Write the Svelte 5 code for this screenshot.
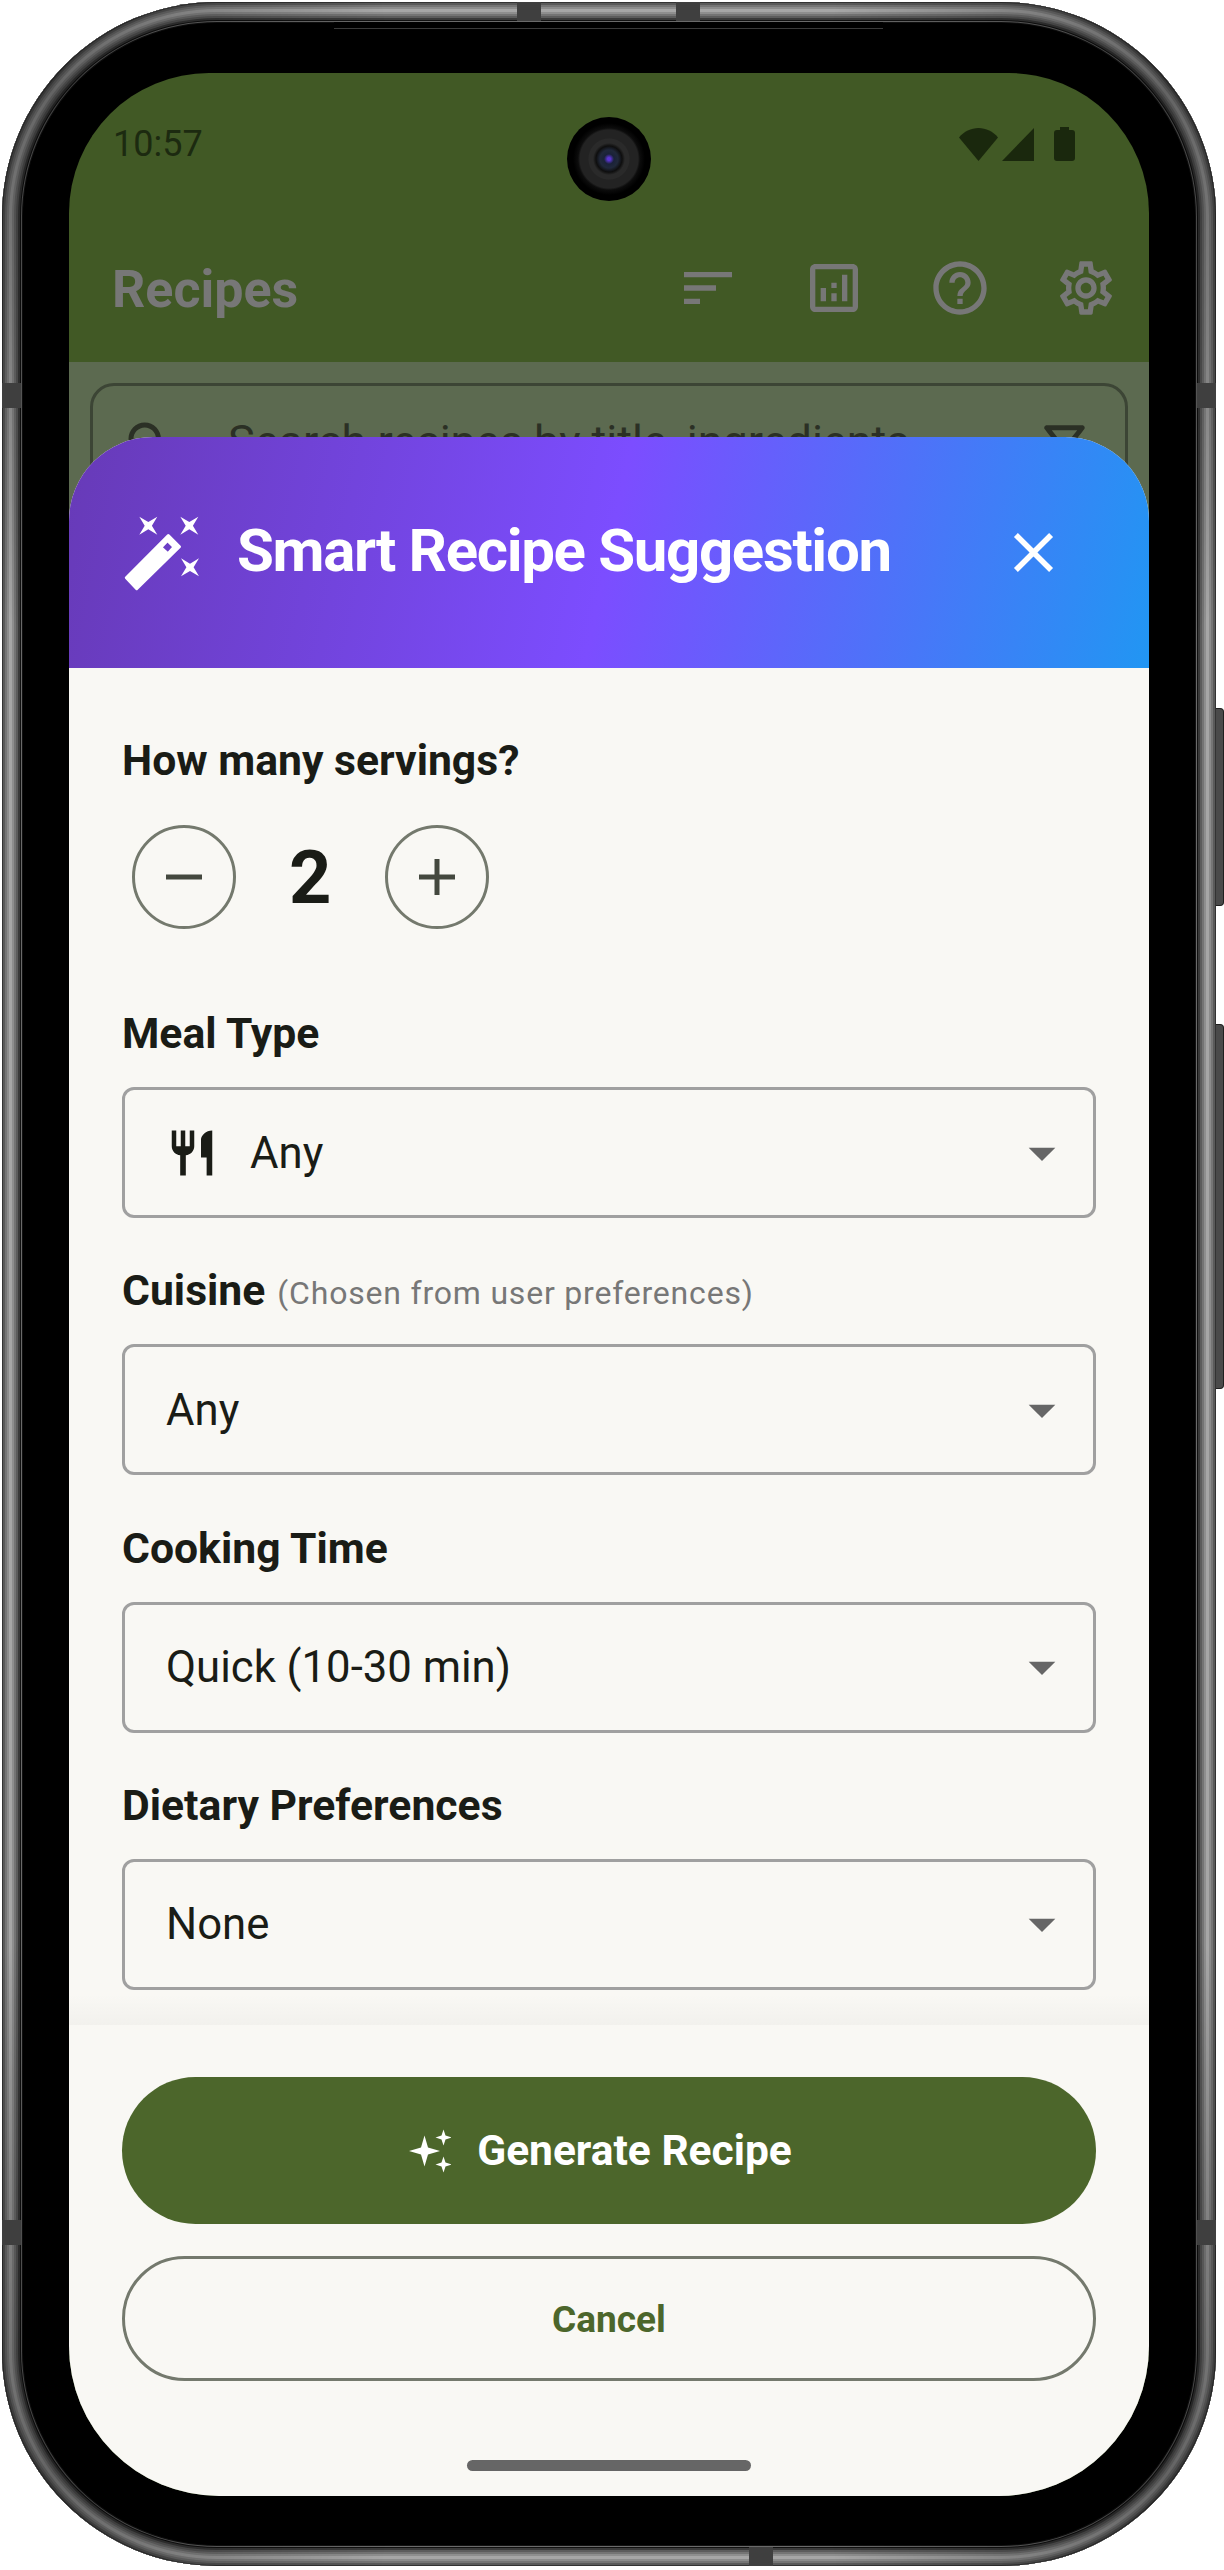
<script>
  const fields = [
    { label: "Cuisine", hint: "(Chosen from user preferences)", value: "Any" },
    { label: "Cooking Time", value: "Quick (10-30 min)" },
    { label: "Dietary Preferences", value: "None" }
  ];

  // four point star, tips on the axes or on the diagonals
  function star(cx, cy, r, waist, diagonal = false) {
    const pts = [];
    for (let i = 0; i < 8; i++) {
      const a = (i * Math.PI) / 4 + (diagonal ? Math.PI / 4 : 0);
      const d = i % 2 === 0 ? r * (diagonal ? 1.41 : 1) : waist;
      pts.push((cx + Math.cos(a) * d).toFixed(1) + " " + (cy + Math.sin(a) * d).toFixed(1));
    }
    return "M" + pts.join("L") + "Z";
  }
</script>

<div class="phone">
  <div class="ring-shade"></div>
  <div class="lip"></div>
  <span class="band top-a"></span>
  <span class="band top-b"></span>
  <span class="band left-a"></span>
  <span class="band left-b"></span>
  <span class="band right-a"></span>
  <span class="band right-b"></span>
  <span class="band bottom-a"></span>
  <span class="key key-power"></span>
  <span class="key key-volume"></span>

  <div class="screen">
    <div class="statusbar">
      <span class="time">10:57</span>
      <div class="status-icons">
        <svg width="39" height="33" viewBox="0 0 39 33"><path d="M0 9.5C5 3.5 12 0 19.5 0S34 3.5 39 9.5L19.5 33Z" /></svg>
        <svg width="33" height="33" viewBox="0 0 33 33"><path d="M0 33 32 0V33Z" /></svg>
        <svg class="battery" width="21" height="34" viewBox="0 0 21 34"><path d="M6 0h9v3h3q3 0 3 3v25q0 3-3 3H3q-3 0-3-3V6q0-3 3-3h3Z" /></svg>
      </div>
    </div>

    <div class="appbar">
      <h1>Recipes</h1>
      <div class="actions">
        <span class="action"><svg width="64" height="64" viewBox="0 0 24 24"><path d="M3 18h6v-2H3v2zM3 6v2h18V6H3zm0 7h12v-2H3v2z" /></svg></span>
        <span class="action"><svg width="64" height="64" viewBox="0 0 24 24"><path d="M19 3H5c-1.1 0-2 .9-2 2v14c0 1.1.9 2 2 2h14c1.1 0 2-.9 2-2V5c0-1.1-.9-2-2-2zm0 16H5V5h14v14z" /><path d="M7 12h2v5H7zM15 7h2v10h-2zM11 14h2v3h-2zM11 10h2v2h-2z" /></svg></span>
        <span class="action"><svg width="64" height="64" viewBox="0 0 24 24"><path d="M11 18h2v-2h-2v2zm1-16C6.48 2 2 6.48 2 12s4.48 10 10 10 10-4.48 10-10S17.52 2 12 2zm0 18c-4.41 0-8-3.59-8-8s3.59-8 8-8 8 3.59 8 8-3.59 8-8 8zm0-14c-2.21 0-4 1.79-4 4h2c0-1.1.9-2 2-2s2 .9 2 2c0 2-3 1.75-3 5h2c0-2.25 3-2.5 3-5 0-2.21-1.79-4-4-4z" /></svg></span>
        <span class="action"><svg width="64" height="64" viewBox="0 0 24 24"><path d="M19.43 12.98c.04-.32.07-.64.07-.98 0-.34-.03-.66-.07-.98l2.11-1.65c.19-.15.24-.42.12-.64l-2-3.46c-.09-.16-.26-.25-.44-.25-.06 0-.12.01-.17.03l-2.49 1c-.52-.4-1.08-.73-1.69-.98l-.38-2.65C14.46 2.18 14.25 2 14 2h-4c-.25 0-.46.18-.49.42l-.38 2.65c-.61.25-1.17.59-1.69.98l-2.49-1c-.06-.02-.12-.03-.18-.03-.17 0-.34.09-.43.25l-2 3.46c-.13.22-.07.49.12.64l2.11 1.65c-.04.32-.07.65-.07.98 0 .33.03.66.07.98l-2.11 1.65c-.19.15-.24.42-.12.64l2 3.46c.09.16.26.25.44.25.06 0 .12-.01.17-.03l2.49-1c.52.4 1.08.73 1.69.98l.38 2.65c.03.24.24.42.49.42h4c.25 0 .46-.18.49-.42l.38-2.65c.61-.25 1.17-.59 1.69-.98l2.49 1c.06.02.12.03.18.03.17 0 .34-.09.43-.25l2-3.46c.12-.22.07-.49-.12-.64l-2.11-1.65zm-1.98-1.71c.04.31.05.52.05.73 0 .21-.02.43-.05.73l-.14 1.13.89.7 1.08.84-.7 1.21-1.27-.51-1.04-.42-.9.68c-.43.32-.84.56-1.25.73l-1.06.43-.16 1.13-.2 1.35h-1.4l-.19-1.35-.16-1.13-1.06-.43c-.43-.18-.83-.41-1.23-.71l-.91-.7-1.06.43-1.27.51-.7-1.21 1.08-.84.89-.7-.14-1.13c-.03-.31-.05-.54-.05-.74s.02-.43.05-.73l.14-1.13-.89-.7-1.08-.84.7-1.21 1.27.51 1.04.42.9-.68c.43-.32.84-.56 1.25-.73l1.06-.43.16-1.13.2-1.35h1.39l.19 1.35.16 1.13 1.06.43c.43.18.83.41 1.23.71l.91.7 1.06-.43 1.27-.51.7 1.21-1.07.85-.89.7.14 1.13zM12 8c-2.21 0-4 1.79-4 4s1.79 4 4 4 4-1.79 4-4-1.79-4-4-4zm0 6c-1.1 0-2-.9-2-2s.9-2 2-2 2 .9 2 2-.9 2-2 2z" /></svg></span>
      </div>
    </div>

    <div class="page">
      <div class="search">
        <svg width="60" height="60" viewBox="0 0 24 24"><path d="M15.5 14h-.79l-.28-.27C15.41 12.59 16 11.11 16 9.5 16 5.91 13.09 3 9.5 3S3 5.91 3 9.5 5.91 16 9.5 16c1.61 0 3.09-.59 4.23-1.57l.27.28v.79l5 4.99L20.49 19l-4.99-5zm-6 0C7.01 14 5 11.99 5 9.5S7.01 5 9.5 5 14 7.01 14 9.5 11.99 14 9.5 14z" /></svg>
        <span class="placeholder">Search recipes by title, ingredients</span>
        <svg class="funnel" width="61" height="61" viewBox="0 0 24 24"><path d="M7 6h10l-5.01 6.3L7 6zm-2.75-.39C6.27 8.2 10 13 10 13v6c0 .55.45 1 1 1h2c.55 0 1-.45 1-1v-6s3.72-4.8 5.74-7.39c.51-.66.04-1.61-.79-1.61H5.04c-.83 0-1.3.95-.79 1.61z" /></svg>
      </div>
    </div>

    <div class="camera"></div>

    <div class="sheet">
      <header>
        <svg class="wand" width="100" height="100" viewBox="0 0 100 100">
          <path d={star(33.3, 20.7, 9, 3.6, true)} />
          <path d={star(74.3, 20.7, 9, 3.6, true)} />
          <path d={star(75, 62.3, 9, 3.6, true)} />
          <path fill-rule="evenodd" stroke="#fff" stroke-width="3" stroke-linejoin="round" d="M53.3 30.5 64.5 41.7 21.7 83.6 11.3 72.7ZM45.8 42.5 52.5 35.5 59 42 53 48.8Z" />
        </svg>
        <h2>Smart Recipe Suggestion</h2>
        <svg class="close" width="67" height="67" viewBox="0 0 24 24"><path d="M19 6.41L17.59 5 12 10.59 6.41 5 5 6.41 10.59 12 5 17.59 6.41 19 12 13.41 17.59 19 19 17.59 13.41 12z" /></svg>
      </header>

      <div class="form">
        <div class="label">How many servings?</div>
        <div class="stepper">
          <span class="round"><svg width="60" height="60" viewBox="0 0 60 60"><path d="M12 27.5h36v5H12Z" /></svg></span>
          <span class="count">2</span>
          <span class="round"><svg width="60" height="60" viewBox="0 0 60 60"><path d="M12 27.5h15.5V12h5v15.500h15.500v5H32.500V48h-5V32.500H12Z" /></svg></span>
        </div>

        <div class="field first">
          <div class="label">Meal Type</div>
          <div class="select with-icon">
            <svg class="cutlery" width="54" height="54" viewBox="0 0 24 24"><path d="M11 9H9V2H7v7H5V2H3v7c0 2.12 1.66 3.84 3.75 3.97V22h2.5v-9.03C11.34 12.84 13 11.12 13 9V2h-2v7zm5-3v8h2.500v8H21V2c-2.760 0-5 2.240-5 4z" /></svg>
            <span>Any</span>
            <svg class="arrow" width="64" height="64" viewBox="0 0 24 24"><path d="M7 10l5 5 5-5z" /></svg>
          </div>
        </div>

        {#each fields as f}
          <div class="field">
            <div class="label">{f.label}{#if f.hint}<span class="hint">{f.hint}</span>{/if}</div>
            <div class="select">
              <span>{f.value}</span>
              <svg class="arrow" width="64" height="64" viewBox="0 0 24 24"><path d="M7 10l5 5 5-5z" /></svg>
            </div>
          </div>
        {/each}
      </div>

      <footer>
        <button class="generate">
          <svg width="42" height="44" viewBox="0 0 42 44">
            <path d={star(15.500, 22, 15.500, 5)} />
            <path d={star(34.500, 8.500, 8, 2.800)} />
            <path d={star(34.500, 35.500, 8, 2.800)} />
          </svg>
          <span>Generate Recipe</span>
        </button>
        <button class="cancel">Cancel</button>
        <div class="home"></div>
      </footer>
    </div>
  </div>
</div>

<style>
  :global(body) {
    background: #fff;
  }
  .phone {
    position: relative;
    box-sizing: border-box;
    width: 1214px;
    height: 2564px;
    margin: 2px 0 0 2px;
    padding: 71px 67px 70px;
    border-radius: 215px;
    background: #000;
    font-family: Roboto, sans-serif;
    color: #1a1c16;
    box-shadow:
      inset 0 0 0 1px #333,
      inset 0 0 0 3px #5a5a5a,
      inset 0 0 0 5px #757575,
      inset 0 0 0 7px #8c8c8c,
      inset 0 0 0 10px #a6a6a6,
      inset 0 0 0 12px #8e8e8e,
      inset 0 0 0 14px #747474,
      inset 0 0 0 16px #5c5c5c,
      inset 0 0 0 18px #3a3a3a,
      inset 0 0 0 19px #111,
      inset 0 0 0 20px #6a6a6a,
      inset 0 0 0 21px #111;
  }
  /* corners of the metal band are darker than the straight parts */
  .ring-shade {
    position: absolute;
    inset: 0;
    box-sizing: border-box;
    border: 21px solid transparent;
    border-radius: 215px;
    background: conic-gradient(
        rgba(0, 0, 0, 0) 0deg 10deg,
        rgba(0, 0, 0, 0.4) 25deg,
        rgba(0, 0, 0, 0) 42deg 138deg,
        rgba(0, 0, 0, 0.4) 155deg,
        rgba(0, 0, 0, 0) 170deg 190deg,
        rgba(0, 0, 0, 0.4) 205deg,
        rgba(0, 0, 0, 0) 222deg 318deg,
        rgba(0, 0, 0, 0.4) 335deg,
        rgba(0, 0, 0, 0) 350deg
      )
      border-box;
    mask:
      linear-gradient(#000 0 0) padding-box exclude,
      linear-gradient(#000 0 0) border-box;
  }
  .lip {
    position: absolute;
    top: 20px;
    left: 332px;
    width: 549px;
    height: 6px;
    background: #000;
    border-bottom: 1px solid #3a3a3a;
  }
  .band {
    position: absolute;
    background: #3f3f3f;
  }
  .top-a, .top-b, .bottom-a {
    width: 24px;
    height: 19px;
  }
  .left-a, .left-b, .right-a, .right-b {
    width: 19px;
    height: 25px;
  }
  .top-a { top: 0; left: 515px; }
  .top-b { top: 0; left: 674px; }
  .bottom-a { bottom: 0; left: 747px; }
  .left-a { left: 0; top: 381px; }
  .left-b { left: 0; top: 2218px; }
  .right-a { right: 0; top: 381px; }
  .right-b { right: 0; top: 2218px; }
  .key {
    position: absolute;
    right: -8px;
    width: 7px;
    background: #4a4a4a;
    border: 1px solid #1f1f1f;
    border-left: 0;
    border-radius: 0 4px 4px 0;
  }
  .key-power { top: 706px; height: 196px; }
  .key-volume { top: 1022px; height: 363px; }

  .screen {
    position: relative;
    display: flex;
    flex-direction: column;
    height: 2423px;
    overflow: hidden;
    border-radius: 140px 140px 150px 150px;
    background: #415925;
  }
  .statusbar {
    display: flex;
    justify-content: space-between;
    align-items: center;
    height: 141px;
    padding: 0 74px 0 44px;
  }
  .time {
    font-size: 36px;
    color: #1c2a10;
  }
  .status-icons {
    display: flex;
    align-items: flex-end;
    gap: 4px;
  }
  .status-icons svg {
    display: block;
    fill: #1a280d;
  }
  .status-icons .battery {
    margin-left: 15px;
  }
  .appbar {
    display: flex;
    align-items: center;
    justify-content: space-between;
    height: 148px;
    padding-left: 43px;
  }
  h1 {
    margin: 2px 0 0;
    font-size: 52px;
    font-weight: 700;
    color: #777;
  }
  .actions {
    display: flex;
  }
  .action {
    display: flex;
    justify-content: center;
    width: 126px;
  }
  .action svg {
    display: block;
    fill: #777;
  }
  .page {
    flex: 1;
    background: #5c6a50;
    padding: 21px 21px 0;
  }
  .search {
    display: flex;
    box-sizing: border-box;
    height: 180px;
    border: 3px solid #3c4535;
    border-radius: 24px;
    padding: 29px 0 0 28px;
    color: #2b3025;
    fill: #2b3025;
  }
  .placeholder {
    margin-left: 47px;
    font-size: 45px;
  }
  .funnel {
    margin-left: auto;
    margin-right: 30px;
  }
  .camera {
    position: absolute;
    top: 44px;
    left: 498px;
    width: 84px;
    height: 84px;
    border-radius: 50%;
    background: radial-gradient(
      circle at 50% 50%,
      #5a35d0 0 1.500px,
      #1a2238 5px,
      #20283a 9px,
      #0e0e0e 13px,
      #2a2a2a 16px 20px,
      #232323 21px 29px,
      #0c0c0c 31px,
      #000 36px
    );
  }

  .sheet {
    position: absolute;
    inset: 364px 0 0;
    display: flex;
    flex-direction: column;
    border-radius: 84px 84px 0 0;
    overflow: hidden;
    background: #f9f8f4;
  }
  header {
    display: flex;
    align-items: center;
    flex: none;
    height: 231px;
    padding: 0 82px 0 46px;
    background: linear-gradient(102deg, #673ab7, #7c4dff 50%, #2196f3);
    color: #fff;
    fill: #fff;
  }
  .wand {
    flex: none;
    margin-top: 5px;
  }
  h2 {
    margin: -5px 0 0 22px;
    font-size: 60px;
    font-weight: 700;
    letter-spacing: -1.350px;
    white-space: nowrap;
  }
  .close {
    margin-left: auto;
  }
  .form {
    flex: 1;
    padding: 68px 53px 0;
    background: linear-gradient(rgba(243, 242, 238, 0), #f2f1ed) bottom / 100% 30px no-repeat;
  }
  .label {
    height: 49px;
    font-size: 42.700px;
    line-height: 49px;
    font-weight: 700;
    white-space: nowrap;
  }
  .hint {
    margin-left: 12px;
    font-size: 32px;
    line-height: 0;
    font-weight: 400;
    letter-spacing: 0.800px;
    vertical-align: 1.500px;
    color: #777;
  }
  .stepper {
    display: flex;
    align-items: center;
    margin: 40px 0 0 10px;
  }
  .round {
    display: flex;
    align-items: center;
    justify-content: center;
    box-sizing: border-box;
    width: 104px;
    height: 104px;
    border: 3px solid #74796d;
    border-radius: 50%;
    fill: #44483e;
  }
  .count {
    width: 148.500px;
    text-align: center;
    font-size: 74px;
    font-weight: 700;
  }
  .field {
    margin-top: 48.300px;
  }
  .field.first {
    margin-top: 80px;
  }
  .select {
    display: flex;
    align-items: center;
    box-sizing: border-box;
    height: 131px;
    margin-top: 29px;
    padding: 0 19px 0 41px;
    border: 3px solid #a0a0a0;
    border-radius: 12px;
    font-size: 43.700px;
  }
  .with-icon {
    padding-left: 40px;
  }
  .cutlery {
    margin-right: 31px;
    fill: #1a1c16;
  }
  .arrow {
    margin-left: auto;
    fill: #666;
  }
  footer {
    flex: none;
    padding: 52px 53px 0;
  }
  button {
    display: flex;
    align-items: center;
    justify-content: center;
    width: 100%;
    border-radius: 74px;
    font-family: inherit;
    color: #4c662b;
  }
  .generate {
    gap: 26px;
    height: 147px;
    padding: 0 17px 0 0;
    border: 0;
    background: #4c662b;
    color: #fff;
    fill: #fff;
    font-size: 42.500px;
    font-weight: 700;
  }
  .cancel {
    height: 125px;
    margin-top: 32px;
    padding-top: 2px;
    border: 3px solid #74796d;
    background: transparent;
    font-size: 37px;
    font-weight: 700;
  }
  .home {
    width: 284px;
    height: 11px;
    margin: 79px auto 25px;
    border-radius: 6px;
    background: #666;
  }
</style>
